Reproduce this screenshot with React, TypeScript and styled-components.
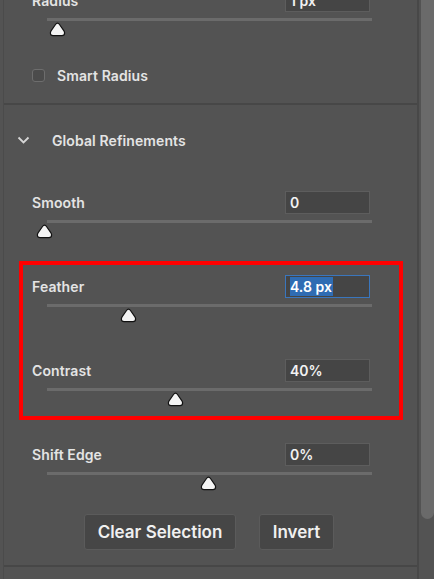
import React from 'react'
import styled, { createGlobalStyle } from 'styled-components'

const GlobalStyle = createGlobalStyle`
  html, body {
    margin: 0;
    padding: 0;
    background: #535353;
    overflow: hidden;
  }
  body {
    font-family: Inter, "Liberation Sans", sans-serif;
    -webkit-font-smoothing: antialiased;
  }
`

const Window = styled.div`
  display: flex;
  width: 434px;
  height: 579px;
  overflow: hidden;
  background: #535353;
`

const Panel = styled.div`
  width: 413px;
  margin-left: 3px;
  border-left: 1px solid #4b4b4b;
  border-right: 2px solid #484848;
  display: flex;
  flex-direction: column;
`

const Scrollbar = styled.div`
  flex: 1;
  display: flex;
  flex-direction: column;
  padding-left: 2px;
`

const ScrollThumb = styled.div`
  height: 519px;
  background: #6a6a6a;
  border-radius: 0 0 8px 8px;
`

const Content = styled.div`
  margin-top: -11px;
  display: flex;
  flex-direction: column;
`

const Row = styled.div`
  padding: 0 45px 0 28px;
  display: flex;
  flex-direction: column;
`

const RowHead = styled.div`
  display: flex;
  justify-content: space-between;
  align-items: center;
  height: 23px;
`

const Label = styled.span`
  font-size: 14px;
  font-weight: 600;
  color: #e4e4e4;
  letter-spacing: 0.1px;
`

const Field = styled.div<{ $active?: boolean }>`
  box-sizing: border-box;
  width: 85px;
  height: 23px;
  margin-right: 2px;
  padding-left: 4px;
  display: flex;
  align-items: center;
  background: #454545;
  border: 1px solid ${p => (p.$active ? '#3a76bd' : '#5d5d5d')};
  font-size: 14px;
  font-weight: 600;
  color: #f2f2f2;
`

const Selected = styled.span`
  background: #2f6cb3;
  color: #ffffff;
  padding: 1px 1px 1px 0;
`

const Track = styled.div`
  position: relative;
  margin: 6px 0 16px 15px;
  height: 3px;
  background: #6b6b6b;
`

const ThumbMark = styled.svg`
  position: absolute;
  top: 4px;
  width: 17px;
  height: 15px;
  margin-left: -8px;
`

const Thumb = ({ at }: { at: number }) => (
  <ThumbMark viewBox="0 0 17 15" style={{ left: `${at}%` }}>
    <path
      d="M8.5 1.2 C9.4 1.2 9.9 1.7 10.5 2.5 L14.8 8.6 C15.4 9.4 15.6 10 15.6 11 C15.6 12.8 14.6 13.6 13 13.6 L4 13.6 C2.4 13.6 1.4 12.8 1.4 11 C1.4 10 1.6 9.4 2.2 8.6 L6.5 2.5 C7.1 1.7 7.6 1.2 8.5 1.2 Z"
      fill="#f4f4f4"
      stroke="#111"
      strokeWidth="1.2"
    />
  </ThumbMark>
)

const CheckRow = styled.label`
  margin: 31px 0 0 28px;
  display: flex;
  align-items: center;
  gap: 12px;
  height: 14px;
`

const Checkbox = styled.span`
  box-sizing: border-box;
  width: 13px;
  height: 13px;
  border: 1px solid #6d6d6d;
  border-radius: 3px;
  background: #4b4b4b;
`

const Divider = styled.div<{ $gap: number }>`
  height: 2px;
  background: #474747;
  margin-top: ${p => p.$gap}px;
`

const SectionHead = styled.div`
  margin: 25px 0 0 13px;
  height: 20px;
  display: flex;
  align-items: center;
  gap: 22px;
`

const Rows = styled.div`
  margin-top: 41px;
  display: flex;
  flex-direction: column;
  gap: 36px;
`

const Highlight = styled.div`
  position: relative;
  display: flex;
  flex-direction: column;
  gap: 36px;

  &::after {
    content: '';
    position: absolute;
    top: -14px;
    bottom: -13px;
    left: 15px;
    right: 14px;
    border: 4px solid #ff0000;
    pointer-events: none;
  }
`

const Actions = styled.div`
  margin-top: 23px;
  display: flex;
  justify-content: center;
  gap: 23px;
  padding-right: 3px;
`

const Button = styled.button<{ $w: number }>`
  box-sizing: border-box;
  width: ${p => p.$w}px;
  height: 36px;
  background: #464646;
  border: 1px solid #5b5b5b;
  border-radius: 3px;
  font-family: Inter, "Liberation Sans", sans-serif;
  font-size: 17px;
  font-weight: 600;
  color: #f0f0f0;
  padding: 0;
`

type SliderProps = { label: string; at: number; children: React.ReactNode; active?: boolean }

const Slider = ({ label, at, children, active }: SliderProps) => (
  <Row>
    <RowHead>
      <Label>{label}</Label>
      <Field $active={active}>{children}</Field>
    </RowHead>
    <Track>
      <Thumb at={at} />
    </Track>
  </Row>
)

const App: React.FC = () => {
  return (
    <Window>
      <GlobalStyle />
      <Panel>
        <Content>
          <Slider label="Radius" at={3}>1 px</Slider>
          <CheckRow>
            <Checkbox />
            <Label>Smart Radius</Label>
          </CheckRow>
          <Divider $gap={21} />
          <SectionHead>
            <svg width="13" height="8" viewBox="0 0 13 8">
              <path d="M1.5 1.5 L6.5 6.5 L11.5 1.5" fill="none" stroke="#d6d6d6" strokeWidth="1.8" />
            </svg>
            <Label>Global Refinements</Label>
          </SectionHead>
          <Rows>
            <Slider label="Smooth" at={-1}>0</Slider>
            <Highlight>
              <Slider label="Feather" at={25} active>
                <Selected>4.8 px</Selected>
              </Slider>
              <Slider label="Contrast" at={39.5}>40%</Slider>
            </Highlight>
            <Slider label="Shift Edge" at={49.5}>0%</Slider>
          </Rows>
          <Actions>
            <Button $w={152}>Clear Selection</Button>
            <Button $w={75}>Invert</Button>
          </Actions>
          <Divider $gap={15} />
        </Content>
      </Panel>
      <Scrollbar>
        <ScrollThumb />
      </Scrollbar>
    </Window>
  )
}

export default App
